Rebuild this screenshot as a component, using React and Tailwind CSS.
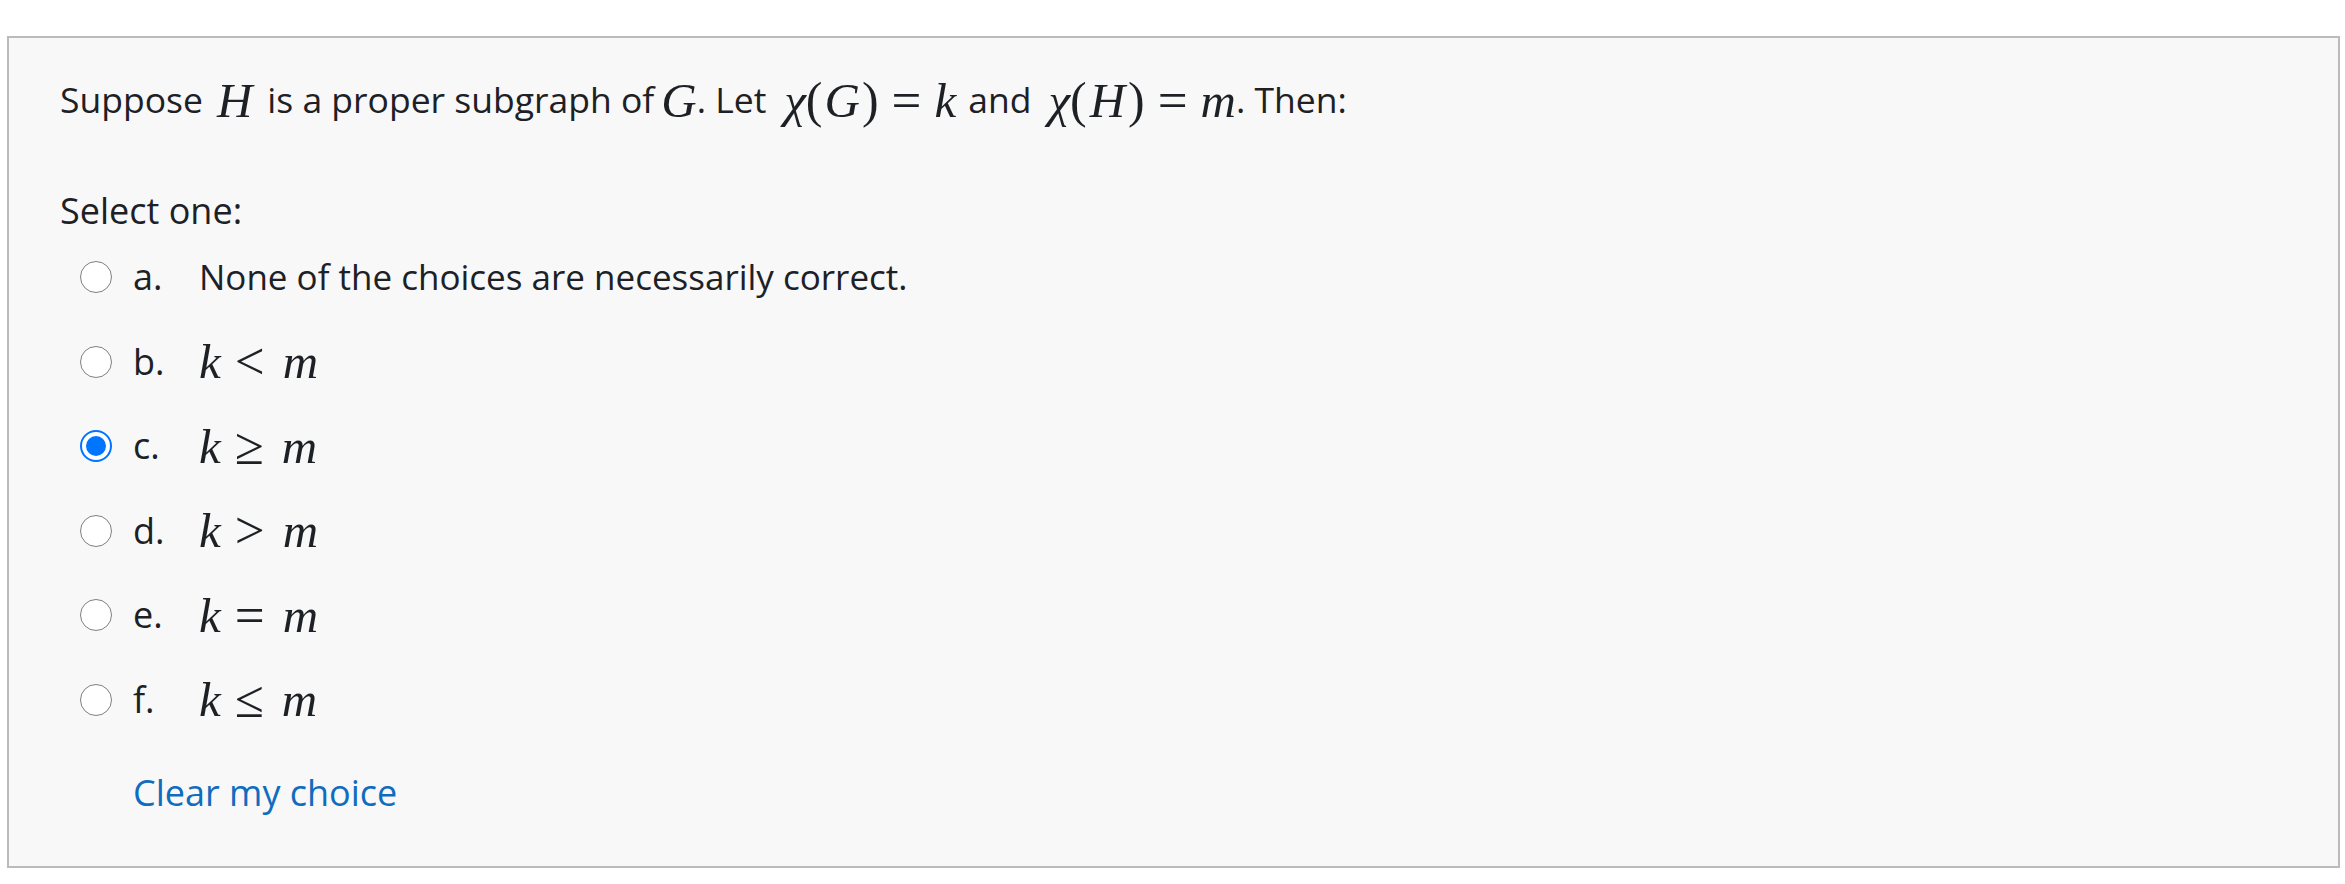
import React from "react";

const sans = { fontFamily: '"Open Sans", "Noto Sans", sans-serif' };
const serif = { fontFamily: '"Liberation Serif", "DejaVu Serif", serif' };

function MI({ children, cls = "" }) {
  return (
    <span className={"italic text-[49px] leading-none " + cls} style={serif}>
      {children}
    </span>
  );
}
function MO({ children, cls = "px-[13px]" }) {
  return (
    <span className={"text-[53px] leading-none " + cls} style={serif}>
      {children}
    </span>
  );
}
function MP({ children, cls = "" }) {
  return (
    <span className={"text-[50px] leading-none " + cls} style={serif}>
      {children}
    </span>
  );
}

function Radio({ checked }) {
  if (checked) {
    return (
      <div className="flex h-[32px] w-[32px] shrink-0 items-center justify-center rounded-full border-[2px] border-[#0075ff] bg-white">
        <div className="h-[20px] w-[20px] rounded-full bg-[#0075ff]" />
      </div>
    );
  }
  return <div className="h-[32px] w-[32px] shrink-0 rounded-full border-[1.5px] border-[#808080] bg-white" />;
}

const options = [
  { l: "a.", t: true, v: "None of the choices are necessarily correct." },
  { l: "b.", op: "<" },
  { l: "c.", op: "≥", checked: true },
  { l: "d.", op: ">" },
  { l: "e.", op: "=" },
  { l: "f.", op: "≤" },
];

export default function App() {
  return (
    <div className="min-h-[884px] bg-white pt-[36px] pl-[7px]" style={sans}>
      <div className="h-[832px] w-[2333px] border-[2px] border-[#bbbbbb] bg-[#f8f8f8] pl-[51px] pt-[34px] text-[#1d2125]">
        <div className="flex h-[56px] items-center text-[35.5px] whitespace-pre">
          <span>Suppose</span>
          <MI cls="ml-[14px] mr-[15px]">H</MI>
          <span>is a proper subgraph of</span>
          <MI cls="ml-[7px]">G</MI>
          <span>. Let</span>
          <MI cls="ml-[18px]">χ</MI>
          <MP>(</MP>
          <MI cls="mx-[2px]">G</MI>
          <MP>)</MP>
          <MO>=</MO>
          <MI cls="mr-[12px]">k</MI>
          <span>and</span>
          <MI cls="ml-[17px]">χ</MI>
          <MP>(</MP>
          <MI cls="mx-[3px]">H</MI>
          <MP>)</MP>
          <MO>=</MO>
          <MI>m</MI>
          <span>. Then:</span>
        </div>
        <div className="mt-[59px] flex h-[48px] items-center text-[36px]">Select one:</div>
        <div className="flex flex-col">
          {options.map((o) => (
            <div key={o.l} className="flex h-[84.5px] items-center">
              <div className="ml-[20px]">
                <Radio checked={o.checked} />
              </div>
              <span className="ml-[21px] w-[66px] text-[36px]">{o.l}</span>
              {o.t ? (
                <span className="text-[35px]">{o.v}</span>
              ) : (
                <span className="flex items-center whitespace-pre">
                  <MI>k</MI>
                  <MO cls="pl-[14px] pr-[18px]">{o.op}</MO>
                  <MI>m</MI>
                </span>
              )}
            </div>
          ))}
        </div>
        <div className="ml-[73px] mt-[23px] flex h-[56px] items-center text-[36px] text-[#0f6cbf]">Clear my choice</div>
      </div>
    </div>
  );
}
